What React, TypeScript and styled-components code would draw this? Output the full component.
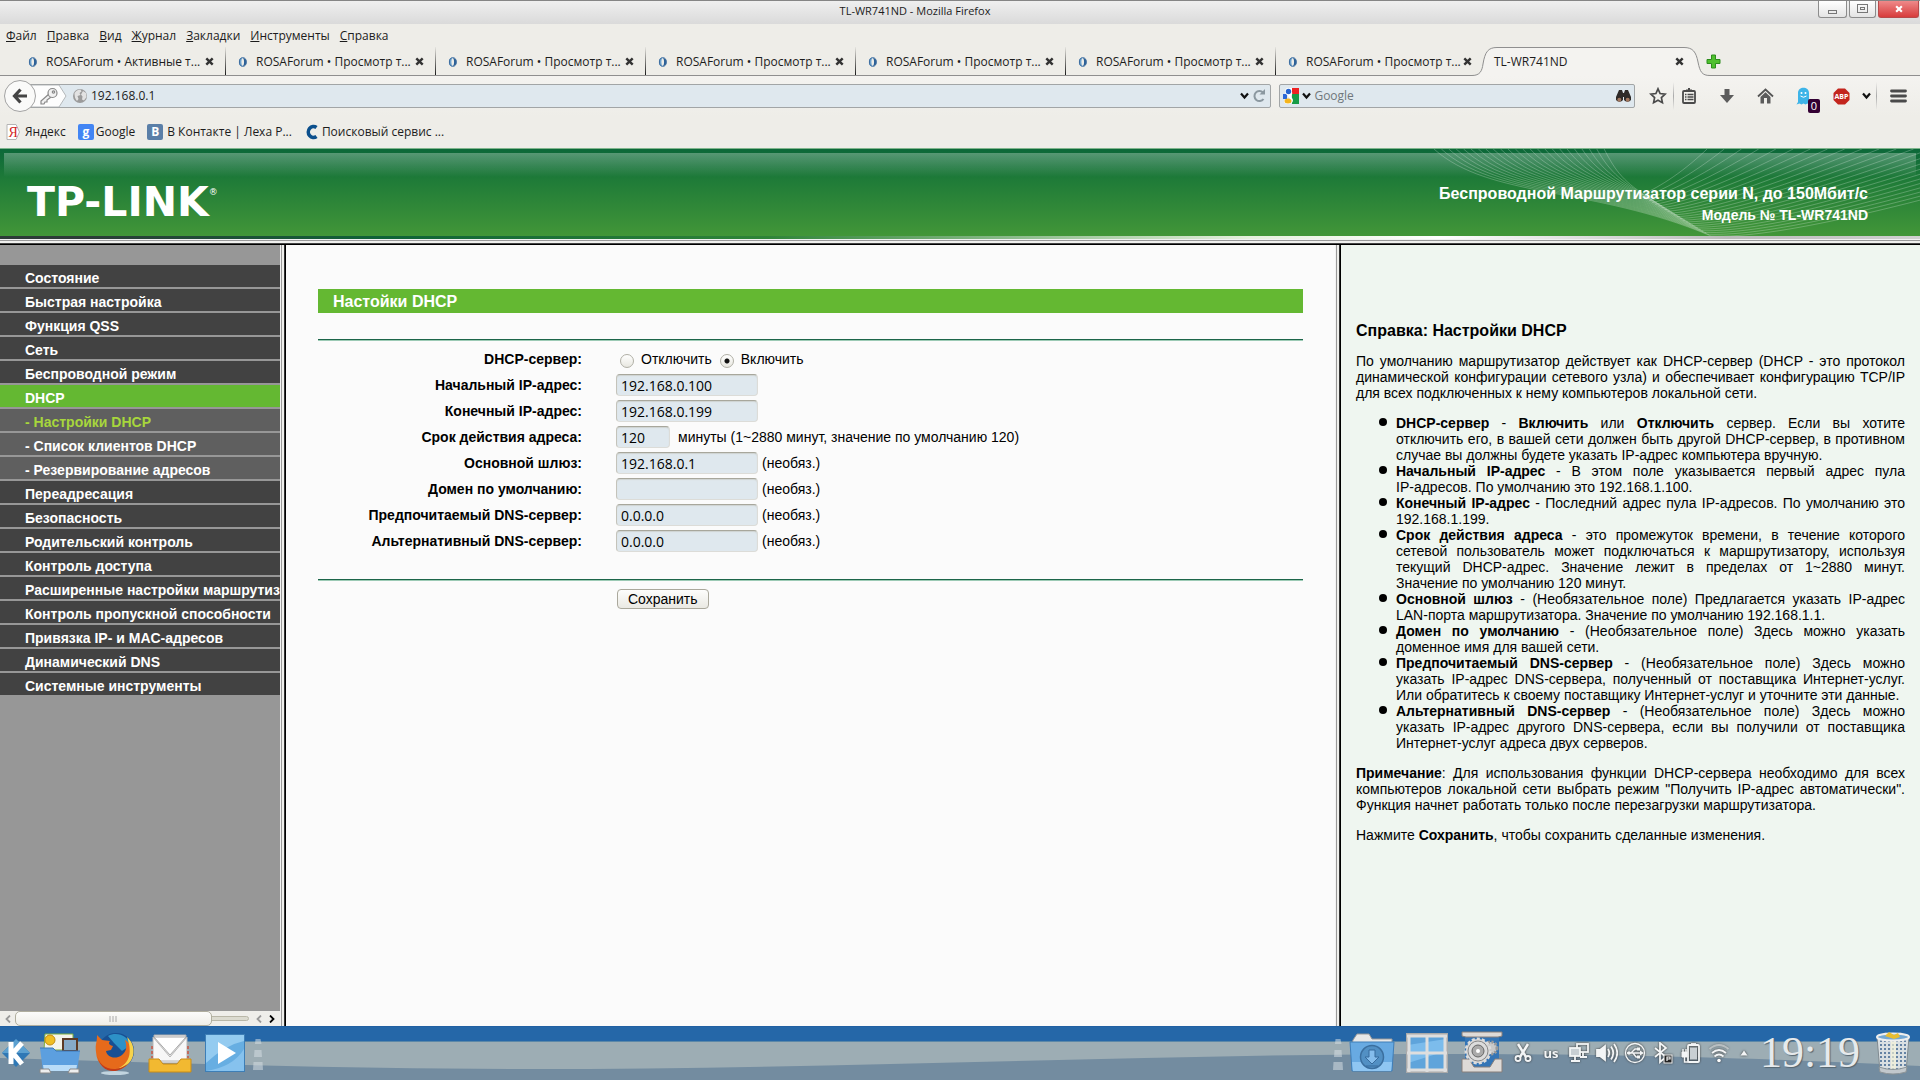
import React, { useState } from "react";
import styled, { createGlobalStyle, css } from "styled-components";

const UI = `"Open Sans", "Noto Sans", sans-serif`;
const PAGE = `"Liberation Sans", Arial, sans-serif`;

const Global = createGlobalStyle`
  * { box-sizing: border-box; }
  body { margin: 0; background: #eeede8; color: #000; font-family: ${PAGE}; font-size: 14px; line-height: 16px; }
  button, input { font: inherit; color: inherit; margin: 0; padding: 0; }
  button { background: none; border: 0; cursor: default; }
  a { color: inherit; text-decoration: none; }
  svg { display: block; flex: none; }
`;

const Window = styled.div`
  min-height: 100vh;
  display: flex;
  flex-direction: column;
`;

/* ---------- browser chrome ---------- */
const Chrome = styled.header`
  font-family: ${UI};
  font-size: 12px;
  line-height: 16px;
  color: #1c1c1c;
`;
const TitleBar = styled.div`
  height: 24px;
  display: grid;
  grid-template-columns: 1fr auto;
  border-top: 1px solid #858585;
  background: linear-gradient(#efefef, #dadada);
`;
const WindowTitle = styled.div`
  text-align: center;
  padding: 2px 0 0 12px;
  font-size: 11px;
`;
const WindowButtons = styled.div`
  display: flex;
  gap: 2px;
  padding-right: 1px;
`;
const WindowButton = styled.button<{ $w: number; $close?: boolean }>`
  width: ${(p) => p.$w}px;
  height: 17px;
  display: grid;
  place-items: center;
  border: 1px solid ${(p) => (p.$close ? "#b84a4a" : "#8c8c8c")};
  border-top: 0;
  border-radius: 0 0 3px 3px;
  background: ${(p) => (p.$close ? "linear-gradient(#ee8a8a, #d83c3c)" : "linear-gradient(#fff, #e4e4e4)")};
`;
const MenuBar = styled.nav`
  height: 23px;
  display: flex;
  align-items: center;
  gap: 10px;
  padding-left: 6px;
`;
const MenuButton = styled.button`
  &::first-letter { text-decoration: underline; }
`;
const TabStrip = styled.div`
  height: 29px;
  display: flex;
  padding-left: 16px;
  border-bottom: 1px solid #8f8f8f;
`;
const Tab = styled.div`
  width: 210px;
  height: 28px;
  display: flex;
  align-items: center;
  padding: 1px 11px 0 12px;
  gap: 8px;
  border-right: 1px solid;
  border-image: linear-gradient(transparent, #111) 1;
  &:nth-child(7) { border: 0; padding-right: 14px; }
`;
const TabTitle = styled.button`
  flex: 1;
  min-width: 0;
  text-align: left;
  white-space: nowrap;
`;
const ActiveTab = styled.div`
  width: 220px;
  height: 29px;
  display: flex;
  align-items: center;
  position: relative;
  padding: 0 22px 0 8px;
  > svg:first-child { position: absolute; left: -14px; top: 0; }
  > button { position: relative; }
`;
const NewTab = styled.button`
  width: 14px;
  height: 28px;
  display: grid;
  place-items: center;
`;
const ToolBar = styled.div`
  height: 40px;
  display: flex;
  align-items: center;
  padding: 0 0 0 4px;
  background: linear-gradient(#f4f3f0, #eeede8);
`;
const BackButton = styled.button`
  width: 32px;
  height: 32px;
  display: grid;
  place-items: center;
  border: 1px solid #a3a3a3;
  border-radius: 50%;
  background: #fafaf9;
  z-index: 1;
`;
const UrlBox = styled.label`
  flex: 1252;
  height: 24px;
  display: flex;
  align-items: center;
  gap: 3px;
  margin-left: -7px;
  padding-right: 4px;
  border: 1px solid #a2a5a6;
  border-radius: 0 2px 2px 0;
  background: #dfe8ee;
`;
const SearchBox = styled(UrlBox)`
  flex: 353;
  margin: 0 8px;
  padding: 0 2px 0 3px;
  border-radius: 2px;
`;
const BareInput = styled.input`
  flex: 1;
  min-width: 0;
  border: 0;
  outline: 0;
  background: none;
  &::placeholder { color: #6f777b; opacity: 1; }
`;
const ToolButton = styled.button<{ $w?: number }>`
  width: ${(p) => p.$w ?? 30}px;
  height: 30px;
  display: grid;
  place-items: center;
  position: relative;
`;
const ToolGroup = styled.div`
  display: flex;
  align-items: center;
  gap: 8px;
`;
const Divider = styled.span`
  width: 1px;
  height: 28px;
  background: linear-gradient(transparent, #aaa, transparent);
`;
const Badge = styled.span`
  position: absolute;
  right: -2px;
  bottom: -2px;
  width: 12px;
  height: 14px;
  line-height: 14px;
  border-radius: 2px;
  background: #330033;
  color: #fff;
  font-size: 11px;
  text-align: center;
`;
const Bookmarks = styled.nav`
  height: 32px;
  display: flex;
  align-items: center;
  padding-left: 6px;
  gap: 12px;
`;
const Bookmark = styled.a<{ $gap: number }>`
  display: flex;
  align-items: center;
  gap: ${(p) => p.$gap}px;
`;
const SiteMark = styled.span<{ $bg: string; $fg: string }>`
  width: 16px;
  height: 16px;
  border-radius: 2px;
  background: ${(p) => p.$bg};
  color: ${(p) => p.$fg};
  font-weight: 700;
  text-align: center;
  line-height: 15px;
`;

/* ---------- router page ---------- */
const Banner = styled.div`
  height: 88px;
  display: flex;
  justify-content: space-between;
  align-items: center;
  position: relative;
  overflow: hidden;
  padding: 18px 52px 0 27px;
  border-top: 1px solid #7fb58c;
  color: #fff;
  font-weight: 700;
  background:
    linear-gradient(rgba(255, 255, 255, 0.3), rgba(255, 255, 255, 0)) no-repeat 4px 4px / calc(100% - 8px) 24px,
    linear-gradient(#0c6839, #1f7b38 31px, #429638);
  > svg { position: absolute; right: 0; top: 0; }
`;
const Logo = styled.div`
  display: flex;
  font-family: "DejaVu Sans", sans-serif;
  font-size: 41px;
  line-height: 40px;
  sup { font-size: 9px; line-height: 20px; font-weight: 400; }
`;
const Product = styled.div`
  position: relative;
  padding-top: 4px;
  text-align: right;
  line-height: 20px;
  strong { display: block; font-size: 16px; line-height: 22px; }
`;
const BannerStrip = styled.div`
  height: 3px;
  background: linear-gradient(90deg, #2d3b37 0%, #2d3b37 4%, #0f6337 20%, #2f8438 40%, #e5f0dc 65%, #fff 75%, #bbb 90%, #d0d0d0);
`;
const RowEdge = styled.div`
  height: 6px;
  background: linear-gradient(#f2f2f2 1px, #9a9a9a 1px 2px, #f0f0ee 2px 4px, #444 4px 5px, #000 5px);
`;
const ColumnEdge = styled.div`
  background: linear-gradient(90deg, #f2f2f2 1px, #9a9a9a 1px 2px, #efefec 2px 4px, #333 4px 5px, #000 5px);
`;
const Frames = styled.div`
  flex: 1;
  display: grid;
  grid-template-columns: 280px 6px minmax(0, 1049fr) 6px minmax(0, 579fr);
`;
const Sidebar = styled.aside`
  min-width: 0;
  display: flex;
  flex-direction: column;
  justify-content: space-between;
  background: #979797;
`;
const SideList = styled.ul`
  margin: 20px 0 0;
  padding: 0;
  list-style: none;
  display: grid;
  gap: 2px;
  overflow: hidden;
`;
const SideLink = styled.a<{ $kind: string }>`
  display: block;
  height: 22px;
  padding: 5px 0 1px 25px;
  font-weight: 700;
  white-space: nowrap;
  color: #fff;
  background: #424242;
  ${(p) => p.$kind === "current" && css`background: #64b832;`}
  ${(p) => (p.$kind === "sub" || p.$kind === "open") && css`background: #5f5f5f;`}
  ${(p) => p.$kind === "open" && css`color: #a7d63c;`}
`;
const ScrollBar = styled.div`
  height: 15px;
  display: flex;
  align-items: center;
  gap: 7px;
  padding: 0 5px;
  background: #efeeea;
`;
const ScrollTrack = styled.div`
  flex: 1;
  height: 5px;
  display: flex;
  align-items: center;
  border: 1px solid #b9b7a8;
  border-radius: 3px;
  background: #dcdbd0;
`;
const ScrollThumb = styled.div`
  width: 86%;
  height: 15px;
  flex: none;
  display: grid;
  place-items: center;
  margin-left: -4px;
  border: 1px solid #b0ae9e;
  border-radius: 5px;
  background: linear-gradient(#fcfcfa, #efeee8);
`;
const Main = styled.main`
  padding: 44px 32px 0 32px;
  background: #fbfbfb;
`;
const PageTitle = styled.h1`
  margin: 0 0 26px;
  padding: 1px 15px 0;
  font-size: 16px;
  line-height: 23px;
  color: #fff;
  background: #64b832;
`;
const Rule = styled.hr`
  height: 2px;
  margin: 0;
  border: 0;
  background: linear-gradient(#1c6549 1px, #9ccab5 1px);
`;
const Fields = styled.div`
  display: grid;
  gap: 4px;
  padding: 7px 0 27px;
`;
const Field = styled.div`
  display: grid;
  grid-template-columns: 264px 1fr;
  column-gap: 34px;
  align-items: center;
  height: 22px;
`;
const FieldName = styled.label`
  text-align: right;
  font-weight: 700;
`;
const FieldValue = styled.div`
  display: flex;
  align-items: center;
`;
const TextInput = styled.input<{ $short?: boolean }>`
  width: ${(p) => (p.$short ? 54 : 142)}px;
  height: 22px;
  padding: 0 4px;
  border: 1px solid #dcdcd8;
  border-top: 1px solid #a8a79c;
  border-left-color: #c4c3ba;
  border-radius: 4px;
  background: #dfe8ee;
  box-shadow: inset 0 1px 1px #cfd3d1;
  font-family: ${UI};
  outline: 0;
`;
const Note = styled.span<{ $wide?: boolean }>`
  padding-left: ${(p) => (p.$wide ? 8 : 4)}px;
`;
const RadioLabel = styled.label`
  display: flex;
  align-items: center;
  gap: 7px;
  padding-left: 4px;
  & + & { padding-left: 8px; }
`;
const Radio = styled.input`
  appearance: none;
  width: 14px;
  height: 14px;
  margin-top: 4px;
  border: 1px solid #b0afa5;
  border-radius: 50%;
  background: linear-gradient(#fff, #e8e7e0);
  &:checked { background: radial-gradient(circle, #111 0 2px, transparent 3px), linear-gradient(#fff, #e8e7e0); }
`;
const SaveButton = styled.button`
  height: 20px;
  margin: 8px 0 0 299px;
  padding: 0 10px;
  border: 1px solid #aaa89c;
  border-radius: 4px;
  background: linear-gradient(#fdfdfc, #eae9e3);
`;
const Help = styled.aside`
  padding: 76px 15px 0 15px;
  background: #eff6f0;
  text-align: justify;
  p { margin: 0 0 14px; }
  ul { margin: 0 0 14px; padding-left: 40px; list-style: none; }
  li { position: relative; }
  li::before {
    content: "";
    position: absolute;
    left: -17px;
    top: 3px;
    width: 8px;
    height: 8px;
    border-radius: 50%;
    background: #000;
  }
`;
const HelpTitle = styled.h2`
  margin: 0 0 12px;
  font-size: 16px;
  line-height: 20px;
`;
const Whole = styled.span`
  white-space: nowrap;
`;

/* ---------- desktop panel ---------- */
const Panel = styled.footer`
  height: 54px;
  display: flex;
  align-items: center;
  position: relative;
  background: linear-gradient(#2160a2 0 1px, #2567a8 1px 15px, #5c88a8 15px 16px, #9dadb4 16px);
  color: #f4f6f7;
`;
const PanelWave = styled.svg`
  position: absolute;
  left: 0;
  bottom: 0;
  width: 100%;
  height: 38px;
`;
const PanelGroup = styled.div`
  display: flex;
  align-items: center;
  position: relative;
`;
const Spacer = styled.div`
  flex: 1;
`;
const Slot = styled.button<{ $w: number }>`
  width: ${(p) => p.$w}px;
  height: 54px;
  display: grid;
  place-items: center;
  font-family: ${UI};
  font-weight: 700;
  font-size: 13px;
  filter: ${(p) => (p.$w < 30 ? "drop-shadow(0 0 1px #333)" : "none")};
`;
const Clock = styled.time`
  width: 110px;
  text-align: center;
  font-family: "Liberation Serif", serif;
  font-size: 44px;
  line-height: 54px;
  color: #e6eaec;
  text-shadow: 1px 1px 1px #56656f;
`;

/* ---------- drawings ---------- */
const Cross = ({ size = 9, color = "#333" }: { size?: number; color?: string }) => (
  <svg width={size} height={size} viewBox="0 0 9 9"><path d="M1.3 1.3l6.4 6.4M7.7 1.3L1.3 7.7" stroke={color} strokeWidth="2.4" /></svg>
);
const Chevron = () => (
  <svg width="9" height="8" viewBox="0 0 9 8"><path d="M1 1.5l3.5 4 3.5-4" fill="none" stroke="#111" strokeWidth="2.2" /></svg>
);
const ForumIcon = () => (
  <svg width="10" height="12" viewBox="0 0 10 12">
    <path d="M4.500 1.500C1.500 2 1 4 1 6s.5 4 3.500 4.500C3 8 3 4 4.500 1.500z" fill="#6fa3cf" />
    <path d="M5 2c3 .5 3.500 2 3.500 4S8 9.500 5 10.200C6.500 8 6.500 4 5 2z" fill="#2a5f96" />
    <ellipse cx="4.800" cy="6" rx="3.400" ry="4.300" fill="none" stroke="#3c6c9f" />
  </svg>
);
const ActiveTabShape = () => (
  <svg width="250" height="29" viewBox="0 0 250 29">
    <path d="M0 28.500C8 28.500 10 24 11 17 13 5 16 .5 25 .5H212C221 .5 224 5 226 15 228 25 230 28.500 238 28.500V29H0z" fill="#f4f3f0" />
    <path d="M0 28.500C8 28.500 10 24 11 17 13 5 16 .5 25 .5H212C221 .5 224 5 226 15 228 25 230 28.500 238 28.500" fill="none" stroke="#8f8f8f" />
  </svg>
);
const Plus = () => (
  <svg width="15" height="15" viewBox="0 0 15 15"><path d="M5.500 1h4v4.500H14v4H9.500V14h-4V9.500H1v-4h4.500z" fill="#4fc02e" stroke="#2c8d1c" /></svg>
);
const BackArrow = () => (
  <svg width="16" height="16" viewBox="0 0 16 16"><path d="M8.500 1.500L2.500 8l6 6.500M3 8h12" fill="none" stroke="#444" strokeWidth="3.200" /></svg>
);
const Identity = () => (
  <svg width="58" height="22" viewBox="0 0 58 22">
    <path d="M0 0H29l7 11-7 11H0z" fill="#fdfdfd" stroke="#b4b8ba" />
    <g fill="#f1f1f1" stroke="#888" strokeWidth="1.200">
      <path d="M19 9L11 16v3h3l1-2h2v-2l4-3z" /><circle cx="22.500" cy="8" r="4.500" /><circle cx="23.500" cy="7" r="1.200" />
    </g>
    <circle cx="50" cy="11" r="7" fill="#9b9b9b" />
    <path d="M44.500 8c2-3 4-3.500 6-3.500l1 2-2 1.500 1 2-3 1 1 3-1.500 2c-2-2-2.500-5-2.500-8zM53 6l3 2 .5 4-2.500 3.500-2-1 .5-3-1.500-2z" fill="#e2e2e2" />
  </svg>
);
const Reload = () => (
  <svg width="14" height="14" viewBox="0 0 14 14"><path d="M11 3.500A5 5 0 1 0 11.500 10" fill="none" stroke="#8b98a0" strokeWidth="2" /><path d="M7.500 5.500H13V0z" fill="#8b98a0" /></svg>
);
const GoogleOld = () => (
  <svg width="16" height="16" viewBox="0 0 16 16">
    <path d="M8 0h8v6H9z" fill="#e22" /><path d="M9 6h7v10H9z" fill="#169c46" /><path d="M0 6h4v5H0z" fill="#2b67d8" />
    <path d="M9 0h-4C1 0 1 7 5 7c-1 2 2 2 2 4H4c-4 0-4 5 1 5 6 0 6-5 3-7 -1-1 2-2 1-5z" fill="#fff" />
    <circle cx="5.500" cy="3.500" r="2.700" fill="#2463cf" /><ellipse cx="5" cy="13" rx="3.500" ry="2.500" fill="#f4b41c" />
  </svg>
);
const Binoculars = () => (
  <svg width="17" height="15" viewBox="0 0 17 15">
    <path d="M4 1h3l1 3h1l1-3h3l3 7v3a4 3.500 0 0 1-7 0V8H8v3a4 3.500 0 0 1-7 0V8z" fill="#2e2a28" />
    <circle cx="4.300" cy="10.800" r="2" fill="#a2775f" /><circle cx="12.700" cy="10.800" r="2" fill="#a2775f" />
  </svg>
);
const Star = () => (
  <svg width="18" height="18" viewBox="0 0 18 18"><path d="M9 1.800l2.100 4.700 5.100.6-3.800 3.500 1 5.100L9 13.200l-4.400 2.500 1-5.100L1.800 7.100l5.100-.6z" fill="none" stroke="#4a4a4a" strokeWidth="1.700" /></svg>
);
const Clipboard = () => (
  <svg width="16" height="16" viewBox="0 0 16 16" fill="none" stroke="#4a4a4a"><rect x="2" y="3" width="12" height="12" rx="1" strokeWidth="1.800" /><path d="M5 2.500h6M7 1h2" strokeWidth="2" /><path d="M4 6.500h1.500M6.500 6.500h6M4 9h1.500M6.500 9h6M4 11.500h1.500M6.500 11.500h6" strokeWidth="1.400" /></svg>
);
const Down = () => (
  <svg width="16" height="16" viewBox="0 0 16 16"><path d="M5.500 1h5v6H15l-7 8-7-8h4.500z" fill="#5c5c5c" /></svg>
);
const Home = () => (
  <svg width="17" height="16" viewBox="0 0 17 16"><path d="M1 8.500L8.500 1.500 16 8.500" fill="none" stroke="#555" strokeWidth="1.800" /><path d="M3.500 9l5-4.700 5 4.700v6.500H10V10H7v5.500H3.500z" fill="#5c5c5c" /></svg>
);
const Ghost = () => (
  <svg width="15" height="18" viewBox="0 0 15 18"><path d="M2 15V6c0-7 11-7 11 0v9l1.500 2.500-3-1-2 1-2-1-2 1-2-1-3 1z" fill="#3db4e8" /><circle cx="5.500" cy="6" r="1" fill="#fff" /><circle cx="9.500" cy="6" r="1" fill="#fff" /><path d="M4.500 9q3 2.500 6 0" fill="none" stroke="#fff" /></svg>
);
const Abp = () => (
  <svg width="17" height="17" viewBox="0 0 17 17"><path d="M5 .5h7L16.500 5v7L12 16.500H5L.5 12V5z" fill="#c3251d" /><text x="8.500" y="11.300" textAnchor="middle" fill="#fff" fontFamily="Open Sans" fontWeight="700" fontSize="7">ABP</text></svg>
);
const Burger = () => (
  <svg width="17" height="14" viewBox="0 0 17 14"><path d="M1.500 2h14M1.500 7h14M1.500 12h14" stroke="#4a4a4a" strokeWidth="2.800" strokeLinecap="round" /></svg>
);
const BlueC = () => (
  <svg width="14" height="16" viewBox="0 0 14 16"><path d="M12.500 3.500A5.200 5.500 0 1 0 12.500 12.500" fill="none" stroke="#0b4f8c" strokeWidth="3.600" /></svg>
);
const YandexMark = () => (
  <svg width="15" height="16" viewBox="0 0 15 16"><path d="M1 .5h9l3.500 7.500-3.500 7.500H1z" fill="#fff" stroke="#b5b5b5" /><text x="2.500" y="13" fill="#d21f1f" fontFamily="Liberation Serif" fontSize="14">Я</text></svg>
);

const Waves = () => {
  const steps = Array.from({ length: 24 }, (_, i) => i / 23);
  return (
    <svg width="490" height="87" viewBox="330 10 1238 262" preserveAspectRatio="none" fill="none" stroke="#fff" strokeOpacity="0.24">
      {steps.map((t) => (
        <path key={`a${t}`} vectorEffect="non-scaling-stroke"
          d={`M${340 + 430 * t} 10C${480 + 320 * t} ${160 - 80 * t} ${740 + 80 * t} ${120 - 10 * t} ${1040 - 150 * t} ${272 - 110 * t}`} />
      ))}
      {steps.map((t) => (
        <path key={`b${t}`} vectorEffect="non-scaling-stroke"
          d={`M${1030 + 1000 * t} 10C${960 + 560 * t} ${90 + 100 * t} ${900 + 300 * t} ${130 + 150 * t} ${860 + 180 * t} ${150 + 122 * t}`} />
      ))}
    </svg>
  );
};

const KIcon = () => (
  <svg width="32" height="32" viewBox="0 0 32 32"><path d="M16 2l14 14-14 14L2 16z" fill="#2f78b5" /><path d="M16 2l14 14H2z" fill="#5ba0d0" /><path d="M11 5v22M22 6L13 16l9 11" fill="none" stroke="#fff" strokeWidth="5" /></svg>
);
const FilesIcon = () => (
  <svg width="44" height="44" viewBox="0 0 44 44">
    <path d="M7 3h28v16H6z" fill="#f4f4ea" stroke="#7fae3d" /><circle cx="12" cy="9" r="5" fill="#efbe22" stroke="#c48c10" />
    <rect x="25" y="8" width="14" height="12" fill="#86aac8" stroke="#5c3a25" strokeWidth="2" />
    <path d="M2 17h13l3 3h24l-3 20H5z" fill="#5c9fdf" /><path d="M5 34h34l-1 6H6z" fill="#b9dcf8" /><path d="M2 17h13l3 3h24" fill="none" stroke="#3c79b8" />
    <path d="M2 38h9l2 4H2zM32 38h9v4H30z" fill="#eee" stroke="#888" />
  </svg>
);
const FirefoxIcon = () => (
  <svg width="42" height="44" viewBox="0 0 42 44">
    <ellipse cx="21" cy="42" rx="14" ry="2" fill="#d5e6ef" opacity=".8" /><circle cx="22" cy="20" r="18" fill="#184f93" /><path d="M14 5c9-5 20 0 23 9l-9 6-8-8z" fill="#2d91c7" />
    <path d="M3 4l5 5 8 1c-2 2-1 4 3 5l-2 4-5 1c1 6 9 9 16 4 5-4 5-9 3-15 8 5 10 13 6 20C28 45 3 42 2 21 1 14 3 12 3 4z" fill="#e66a1b" />
    <path d="M33 6c9 8 8 20 2 26-4 4-8 5-12 6 14-6 15-18 10-32z" fill="#f6d34b" /><path d="M3 22c1 18 22 20 31 10-8 12-29 12-31-10z" fill="#c33b18" />
  </svg>
);
const MailIcon = () => (
  <svg width="44" height="42" viewBox="0 0 44 42">
    <path d="M6 3h32v28H6z" fill="#eee" stroke="#aaa" /><path d="M5 5l17 20L39 5v24H5z" fill="#f7f7f7" stroke="#b5b5b5" /><path d="M6 5h32L22 23z" fill="#fff" stroke="#aaa" />
    <path d="M4 14v12M40 14v12" stroke="#c06b5e" strokeWidth="2" strokeDasharray="3 2" /><path d="M1 27h10l4 5h14l4-5h10v13H1z" fill="#f2b931" stroke="#c98c16" />
  </svg>
);
const PlayIcon = () => (
  <svg width="40" height="40" viewBox="0 0 40 40"><rect x=".5" y="1.500" width="39" height="37" fill="#67aee2" stroke="#3d7eb6" /><path d="M1 2h38v6Q20 12 1 30z" fill="#94cbf0" /><path d="M1 38Q28 34 39 16v22z" fill="#86c2ee" /><path d="M13 9l18 11-18 11z" fill="#fff" /></svg>
);
const Handle = () => (
  <svg width="12" height="36" viewBox="0 0 12 36" fill="#d3dde2" fillOpacity="0.55"><path d="M3.500 4h5l1 5h-6.500zM2.500 15h7l.5 7H2zM1.500 27h9l.5 8H1z" /></svg>
);
const DownloadsIcon = () => (
  <svg width="46" height="42" viewBox="0 0 46 42"><path d="M4 8l4-6h12l3 5h20v5H3z" fill="#e8e8e8" stroke="#999" /><path d="M1 10h44l-2 29H3z" fill="#68aae2" stroke="#3f7eb8" /><path d="M3 30h40l-1 9H4z" fill="#8fc6f2" /><circle cx="23" cy="25" r="11.500" fill="#5290c4" stroke="#3b6f9f" strokeWidth="1.500" /><path d="M20 18h6v7h4l-7 7-7-7h4zM17 34h12" fill="#85bdec" stroke="#376b9c" /></svg>
);
const DesksIcon = () => (
  <svg width="42" height="40" viewBox="0 0 42 40"><rect x="1" y="1" width="40" height="38" fill="#5fa4db" stroke="#aaa" strokeWidth="2" /><path d="M2 12L40 6v12L2 30z" fill="#7cbcec" /><path d="M1 3h40M21 3v36M1 20h40M3 3v36M39 3v36M1 37h40" stroke="#dedede" strokeWidth="3" /></svg>
);
const SettingsIcon = () => (
  <svg width="42" height="44" viewBox="0 0 42 44">
    <rect x="4" y="4" width="34" height="35" fill="#3475b6" /><path d="M1 1h40v4l-4 1H5L1 5zM1 28h7l5 8h16l5-8h7v13H1z" fill="#dedad7" stroke="#877f7b" />
    <circle cx="30" cy="17" r="6" fill="#c9c9c9" stroke="#999" strokeWidth="3" strokeDasharray="2 1.500" /><circle cx="17" cy="20" r="12" fill="#d4d4d4" stroke="#dcdcdc" strokeWidth="3" strokeDasharray="3 2" /><circle cx="17" cy="20" r="10" fill="#dcdcdc" stroke="#888" /><circle cx="17" cy="20" r="6" fill="#aaa" stroke="#666" /><circle cx="17" cy="20" r="2" fill="#fff" />
  </svg>
);
const trayProps = { width: 22, height: 22, viewBox: "0 0 22 22", fill: "none", stroke: "#f3f5f6", strokeWidth: 1.800 };
const Scissors = () => <svg {...trayProps}><path d="M6 2l8 13M16 2L8 15" strokeWidth="2.500" /><circle cx="6" cy="16.500" r="2.500" /><circle cx="16" cy="16.500" r="2.500" /></svg>;
const Network = () => <svg {...trayProps}><rect x="9" y="2" width="11" height="8" /><rect x="2" y="6" width="10" height="8" fill="#c8cfd3" /><path d="M7 14v4M3 19h9M15 10v4M12 15h7" /></svg>;
const Sound = () => <svg {...trayProps}><path d="M1 8h3l5-4v14l-5-4H1z" fill="#f3f5f6" /><path d="M12 7q2.500 4 0 8M15 4.500q4.500 6.500 0 13M18 2q6.500 9 0 18" /></svg>;
const Usb = () => <svg {...trayProps}><circle cx="11" cy="11" r="9.500" strokeWidth="1.300" /><path d="M3 11h15M7 11l4-4h3M9 11l3 4h2" strokeWidth="1.400" /><circle cx="5" cy="11" r="1.800" fill="#f3f5f6" stroke="none" /><path d="M16 8.500l4 2.500-4 2.500zM13 5.500h3v3h-3zM13 13.500h3v3h-3z" fill="#f3f5f6" stroke="none" /></svg>;
const Bluetooth = () => <svg {...trayProps}><path d="M3 6l11 9-6 5V1l6 5-11 9" /><rect x="12" y="13" width="8" height="8" fill="#222" strokeWidth="1" /><path d="M15 19v-4h3v2h-3" strokeWidth="1.200" /></svg>;
const Battery = () => <svg {...trayProps}><rect x="8" y="3" width="11" height="17" rx="1" /><rect x="10" y="5.500" width="7" height="12" fill="#c8cfd3" stroke="none" /><path d="M11 2h5" /><path d="M2 10h5v5H2z" fill="#f3f5f6" strokeWidth="1" /><path d="M3 7v3M6 7v3M4.500 15v5h4" strokeWidth="1.400" /></svg>;
const Wifi = () => <svg {...trayProps}><path d="M1.500 7q9.500-8 19 0" strokeOpacity=".5" /><path d="M4 11q7-6 14 0M6.500 14.500q4.500-4 9 0" /><circle cx="11" cy="18.500" r="1.800" fill="#fff" stroke="none" /></svg>;
const Up = () => <svg width="8" height="8" viewBox="0 0 8 8"><path d="M4 1.500L7.500 6.500h-7z" fill="#f3f5f6" /></svg>;
const Trash = () => (
  <svg width="36" height="44" viewBox="0 0 36 44">
    <path d="M2 6l8-4 8 2 8-2 8 4-3 35q-13 4-26 0z" fill="#d9dfe2" stroke="#808a90" />
    <path d="M6 9v31M10 9v32M14 9v33M18 9v33M22 9v33M26 9v32M30 9v31" stroke="#486c94" strokeWidth="1.600" strokeDasharray="2 2" /><path d="M16 9h5v32h-5z" fill="#f8f4d8" opacity=".65" />
    <ellipse cx="18" cy="6" rx="16" ry="3.500" fill="#74a8d4" stroke="#eee" strokeWidth="2" /><path d="M10 5l4-4 5 3 4-2 2 4-6 2z" fill="#e7bd31" />
    <path d="M4 36q14 5 28 0l-1 5q-13 4-26 0z" fill="#c2c8cc" stroke="#8b9499" />
  </svg>
);

/* ---------- content ---------- */
const menus = ["Файл", "Правка", "Вид", "Журнал", "Закладки", "Инструменты", "Справка"];
const tabs = ["Активные т...", ...Array(6).fill("Просмотр т...")];
const sections: [string, string?][] = [
  ["Состояние"], ["Быстрая настройка"], ["Функция QSS"], ["Сеть"], ["Беспроводной режим"],
  ["DHCP", "current"], ["- Настройки DHCP", "open"], ["- Список клиентов DHCP", "sub"], ["- Резервирование адресов", "sub"],
  ["Переадресация"], ["Безопасность"], ["Родительский контроль"], ["Контроль доступа"],
  ["Расширенные настройки маршрутизации"], ["Контроль пропускной способности"],
  ["Привязка IP- и MAC-адресов"], ["Динамический DNS"], ["Системные инструменты"],
];
const fields = [
  { id: "start", name: "Начальный IP-адрес:", value: "192.168.0.100" },
  { id: "end", name: "Конечный IP-адрес:", value: "192.168.0.199" },
  { id: "lease", name: "Срок действия адреса:", value: "120", short: true, note: "минуты (1~2880 минут, значение по умолчанию 120)" },
  { id: "gateway", name: "Основной шлюз:", value: "192.168.0.1", note: "(необяз.)" },
  { id: "domain", name: "Домен по умолчанию:", value: "", note: "(необяз.)" },
  { id: "dns1", name: "Предпочитаемый DNS-сервер:", value: "0.0.0.0", note: "(необяз.)" },
  { id: "dns2", name: "Альтернативный DNS-сервер:", value: "0.0.0.0", note: "(необяз.)" },
];

function Browser() {
  return (
    <Chrome>
      <TitleBar>
        <WindowTitle>TL-WR741ND - Mozilla Firefox</WindowTitle>
        <WindowButtons>
          <WindowButton $w={29} aria-label="Свернуть"><svg width="11" height="12"><rect x="1.500" y="7.500" width="8" height="3" fill="none" stroke="#777" /></svg></WindowButton>
          <WindowButton $w={27} aria-label="Развернуть"><svg width="11" height="10"><rect x=".5" y=".5" width="10" height="8" fill="none" stroke="#777" /><rect x="3.500" y="3.500" width="4" height="2" fill="none" stroke="#777" /></svg></WindowButton>
          <WindowButton $w={41} $close aria-label="Закрыть"><Cross size={8} color="#fff" /></WindowButton>
        </WindowButtons>
      </TitleBar>
      <MenuBar>{menus.map((m) => <MenuButton key={m}>{m}</MenuButton>)}</MenuBar>
      <TabStrip>
        {tabs.map((t, i) => (
          <Tab key={i}>
            <ForumIcon />
            <TabTitle>ROSAForum • {t}</TabTitle>
            <button aria-label="Закрыть вкладку"><Cross /></button>
          </Tab>
        ))}
        <ActiveTab>
          <ActiveTabShape />
          <TabTitle>TL-WR741ND</TabTitle>
          <button aria-label="Закрыть вкладку"><Cross /></button>
        </ActiveTab>
        <NewTab aria-label="Новая вкладка"><Plus /></NewTab>
      </TabStrip>
      <ToolBar>
        <BackButton aria-label="Назад"><BackArrow /></BackButton>
        <UrlBox>
          <Identity />
          <BareInput aria-label="Адрес" defaultValue="192.168.0.1" />
          <Chevron />
          <Reload />
        </UrlBox>
        <SearchBox>
          <GoogleOld />
          <Chevron />
          <BareInput aria-label="Поиск" placeholder="Google" />
          <Binoculars />
        </SearchBox>
        <ToolButton aria-label="В закладки"><Star /></ToolButton>
        <Divider />
        <ToolGroup>
          <ToolButton aria-label="Закладки"><Clipboard /></ToolButton>
          <ToolButton aria-label="Загрузки"><Down /></ToolButton>
          <ToolButton aria-label="Домой"><Home /></ToolButton>
          <ToolButton aria-label="Ghostery"><Ghost /><Badge>0</Badge></ToolButton>
          <ToolButton aria-label="Adblock Plus"><Abp /></ToolButton>
        </ToolGroup>
        <ToolButton $w={20} aria-label="Ещё"><Chevron /></ToolButton>
        <Divider />
        <ToolButton $w={43} aria-label="Меню"><Burger /></ToolButton>
      </ToolBar>
      <Bookmarks>
        <Bookmark href="#" $gap={4}><YandexMark />Яндекс</Bookmark>
        <Bookmark href="#" $gap={2}><SiteMark $bg="#4285f4" $fg="#fff">g</SiteMark>Google</Bookmark>
        <Bookmark href="#" $gap={4}><SiteMark $bg="#5a7fa8" $fg="#fff">B</SiteMark>В Контакте | Леха Р...</Bookmark>
        <Bookmark href="#" $gap={4}><BlueC />Поисковый сервис ...</Bookmark>
      </Bookmarks>
    </Chrome>
  );
}

function DhcpForm() {
  const [enabled, setEnabled] = useState(true);
  return (
    <form onSubmit={(e) => e.preventDefault()}>
      <Rule />
      <Fields>
        <Field role="radiogroup" aria-labelledby="server">
          <FieldName as="span" id="server">DHCP-сервер:</FieldName>
          <FieldValue>
            <RadioLabel><Radio type="radio" name="dhcp" checked={!enabled} onChange={() => setEnabled(false)} />Отключить</RadioLabel>
            <RadioLabel><Radio type="radio" name="dhcp" checked={enabled} onChange={() => setEnabled(true)} />Включить</RadioLabel>
          </FieldValue>
        </Field>
        {fields.map((f) => (
          <Field key={f.id}>
            <FieldName htmlFor={f.id}>{f.name}</FieldName>
            <FieldValue>
              <TextInput id={f.id} type="text" defaultValue={f.value} $short={f.short} />
              {f.note && <Note $wide={f.short}>{f.note}</Note>}
            </FieldValue>
          </Field>
        ))}
      </Fields>
      <Rule />
      <SaveButton type="submit">Сохранить</SaveButton>
    </form>
  );
}

function HelpPane() {
  return (
    <Help>
      <HelpTitle>Справка: Настройки DHCP</HelpTitle>
      <p>По умолчанию маршрутизатор действует как DHCP-сервер (DHCP - это протокол динамической конфигурации сетевого узла) и обеспечивает конфигурацию TCP/IP для всех подключенных к нему компьютеров локальной сети.</p>
      <ul>
        <li><b>DHCP-сервер</b> - <b>Включить</b> или <b>Отключить</b> сервер. Если вы хотите отключить его, в вашей сети должен быть другой DHCP-сервер, в противном случае вы должны будете указать IP-адрес компьютера вручную.</li>
        <li><b>Начальный IP-адрес</b> - В этом поле указывается первый адрес пула <Whole>IP-адресов.</Whole> По умолчанию это 192.168.1.100.</li>
        <li><b>Конечный IP-адрес</b> - Последний адрес пула IP-адресов. По умолчанию это 192.168.1.199.</li>
        <li><b>Срок действия адреса</b> - это промежуток времени, в течение которого сетевой пользователь может подключаться к маршрутизатору, используя текущий DHCP-адрес. Значение лежит в пределах от 1~2880 минут. Значение по умолчанию 120 минут.</li>
        <li><b>Основной шлюз</b> - (Необязательное поле) Предлагается указать IP-адрес LAN-порта маршрутизатора. Значение по умолчанию 192.168.1.1.</li>
        <li><b>Домен по умолчанию</b> - (Необязательное поле) Здесь можно указать доменное имя для вашей сети.</li>
        <li><b>Предпочитаемый DNS-сервер</b> - (Необязательное поле) Здесь можно указать IP-адрес DNS-сервера, полученный от поставщика Интернет-услуг. Или обратитесь к своему поставщику Интернет-услуг и уточните эти данные.</li>
        <li><b>Альтернативный DNS-сервер</b> - (Необязательное поле) Здесь можно указать IP-адрес другого DNS-сервера, если вы получили от поставщика Интернет-услуг адреса двух серверов.</li>
      </ul>
      <p><b>Примечание</b>: Для использования функции DHCP-сервера необходимо для всех компьютеров локальной сети выбрать режим "Получить IP-адрес автоматически". Функция начнет работать только после перезагрузки маршрутизатора.</p>
      <p>Нажмите <b>Сохранить</b>, чтобы сохранить сделанные изменения.</p>
    </Help>
  );
}

function DesktopPanel() {
  return (
    <Panel>
      <PanelWave viewBox="0 0 1920 38" preserveAspectRatio="none">
        <path d="M0 16C200 22 350 27 530 27 850 27 1150 12 1450 12 1650 12 1800 18 1920 24V38H0z" fill="#738ca0" />
      </PanelWave>
      <PanelGroup>
        <Slot $w={32} aria-label="Меню приложений"><KIcon /></Slot>
        <Slot $w={55} aria-label="Файлы"><FilesIcon /></Slot>
        <Slot $w={55} aria-label="Firefox"><FirefoxIcon /></Slot>
        <Slot $w={55} aria-label="Почта"><MailIcon /></Slot>
        <Slot $w={55} aria-label="Проигрыватель"><PlayIcon /></Slot>
        <Handle />
      </PanelGroup>
      <Spacer />
      <PanelGroup>
        <Handle />
        <Slot $w={55} aria-label="Загрузки"><DownloadsIcon /></Slot>
        <Slot $w={55} aria-label="Рабочие столы"><DesksIcon /></Slot>
        <Slot $w={55} aria-label="Настройки"><SettingsIcon /></Slot>
        <Slot $w={28} aria-label="Буфер обмена"><Scissors /></Slot>
        <Slot $w={28}>us</Slot>
        <Slot $w={28} aria-label="Сеть"><Network /></Slot>
        <Slot $w={28} aria-label="Звук"><Sound /></Slot>
        <Slot $w={28} aria-label="USB"><Usb /></Slot>
        <Slot $w={28} aria-label="Bluetooth"><Bluetooth /></Slot>
        <Slot $w={28} aria-label="Батарея"><Battery /></Slot>
        <Slot $w={28} aria-label="Wi-Fi"><Wifi /></Slot>
        <Slot $w={22} aria-label="Показать значки"><Up /></Slot>
        <Clock>19:19</Clock>
        <Slot $w={55} aria-label="Корзина"><Trash /></Slot>
      </PanelGroup>
    </Panel>
  );
}

const Arrow = ({ left, dark }: { left?: boolean; dark?: boolean }) => (
  <svg width="6" height="8" viewBox="0 0 6 8"><path d={left ? "M5 .5L1.500 4 5 7.500" : "M1 .5L4.500 4 1 7.500"} fill="none" stroke={dark ? "#000" : "#999"} strokeWidth="1.800" /></svg>
);

export default function App() {
  return (
    <Window>
      <Global />
      <Browser />
      <Banner>
        <Waves />
        <Logo>TP-LINK<sup>®</sup></Logo>
        <Product><strong>Беспроводной Маршрутизатор серии N, до 150Мбит/с</strong>Модель № TL-WR741ND</Product>
      </Banner>
      <BannerStrip />
      <RowEdge />
      <Frames>
        <Sidebar>
          <SideList>
            {sections.map(([name, kind]) => (
              <li key={name}><SideLink href="#" $kind={kind ?? "plain"}>{name}</SideLink></li>
            ))}
          </SideList>
          <ScrollBar>
            <button aria-label="Влево"><Arrow left /></button>
            <ScrollTrack><ScrollThumb><svg width="8" height="6"><path d="M1 0v6M4 0v6M7 0v6" stroke="#aaa" /></svg></ScrollThumb></ScrollTrack>
            <button aria-label="Назад"><Arrow left /></button>
            <button aria-label="Вправо"><Arrow dark /></button>
          </ScrollBar>
        </Sidebar>
        <ColumnEdge />
        <Main>
          <PageTitle>Настойки DHCP</PageTitle>
          <DhcpForm />
        </Main>
        <ColumnEdge />
        <HelpPane />
      </Frames>
      <DesktopPanel />
    </Window>
  );
}
